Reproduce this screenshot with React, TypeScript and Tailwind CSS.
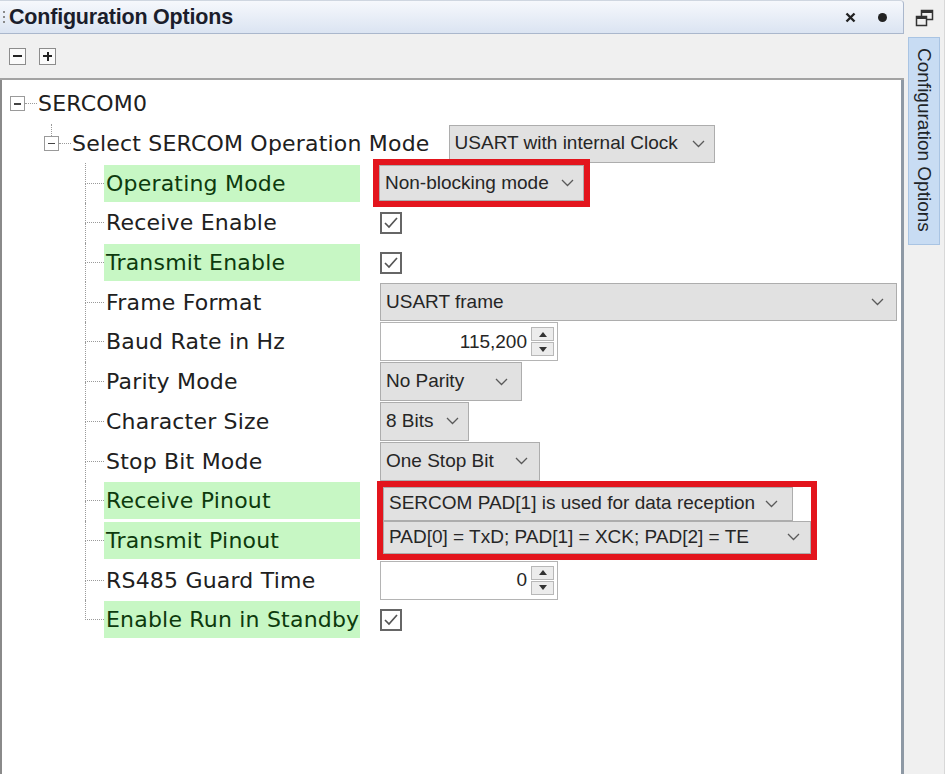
import React from "react";

const LABEL_FONT = { fontFamily: '"DejaVu Sans", Verdana, sans-serif' };

function Chevron() {
  return (
    <svg width="13" height="8" viewBox="0 0 13 8" className="shrink-0">
      <polyline points="1,1 6.5,6.5 12,1" fill="none" stroke="#5a5a5a" strokeWidth="1.3" />
    </svg>
  );
}

function Dropdown({ value, className }: { value: string; className: string }) {
  return (
    <div
      className={`bg-[#e1e1e1] border border-[#adadad] flex items-center justify-between pl-[5px] pr-[9px] text-[19px] text-[#262626] ${className}`}
      style={{ fontFamily: '"Liberation Sans", Arial, sans-serif' }}
    >
      <span className="whitespace-nowrap">{value}</span>
      <Chevron />
    </div>
  );
}

function Spinner({ value }: { value: string }) {
  return (
    <div className="w-[178px] h-[39px] bg-white border border-[#b4b4b4] flex items-center justify-end pr-[3px] gap-[4px]">
      <span className="text-[19px] text-[#262626]" style={{ fontFamily: '"Liberation Sans", Arial, sans-serif' }}>
        {value}
      </span>
      <div className="flex flex-col gap-[1px]">
        <div className="w-[23px] h-[14px] bg-[#ececec] border border-[#b8b8b8] flex items-center justify-center">
          <svg width="8" height="5" viewBox="0 0 8 5">
            <polygon points="4,0 8,5 0,5" fill="#333" />
          </svg>
        </div>
        <div className="w-[23px] h-[14px] bg-[#ececec] border border-[#b8b8b8] flex items-center justify-center">
          <svg width="8" height="5" viewBox="0 0 8 5">
            <polygon points="0,0 8,0 4,5" fill="#333" />
          </svg>
        </div>
      </div>
    </div>
  );
}

function Checkbox() {
  return (
    <div className="w-[22px] h-[22px] border-2 border-[#666] bg-white flex items-center justify-center">
      <svg width="16" height="14" viewBox="0 0 16 14">
        <polyline points="2,7 6,11 14,2" fill="none" stroke="#555" strokeWidth="1.7" />
      </svg>
    </div>
  );
}

function TreeBox() {
  return (
    <div className="w-[15px] h-[15px] border border-[#9a9a9a] bg-white flex items-center justify-center shrink-0">
      <div className="w-[7px] h-[1.5px] bg-[#444]" />
    </div>
  );
}

function Branch({ last }: { last?: boolean }) {
  return (
    <div className="w-[19px] self-stretch flex flex-col shrink-0">
      <div className="flex-1 border-l border-b border-dotted border-[#9a9a9a]" />
      <div className={`flex-1 ${last ? "" : "border-l border-dotted border-[#9a9a9a]"}`} />
    </div>
  );
}

function Label({ text, green }: { text: string; green?: boolean }) {
  return (
    <div
      className={`w-[256px] h-[37px] flex items-center pl-[2px] text-[22px] tracking-[0.2px] whitespace-nowrap ${
        green ? "bg-[#c7f7c4] text-[#0d3a0d]" : "text-[#202020]"
      }`}
      style={LABEL_FONT}
    >
      {text}
    </div>
  );
}

function Row({
  label,
  green,
  last,
  children,
}: {
  label: string;
  green?: boolean;
  last?: boolean;
  children?: React.ReactNode;
}) {
  return (
    <div className="flex h-[39.7px] items-center">
      <Branch last={last} />
      <Label text={label} green={green} />
      <div className="ml-[20px] flex items-center">{children}</div>
    </div>
  );
}

function RestoreIcon() {
  return (
    <svg width="19" height="19" viewBox="0 0 19 19">
      <rect x="6.5" y="1.5" width="11" height="9" fill="none" stroke="#333" strokeWidth="1.5" />
      <rect x="6.5" y="1" width="11" height="3" fill="#333" />
      <rect x="1.5" y="7.5" width="10" height="9" fill="#f0f0f0" stroke="#333" strokeWidth="1.5" />
      <rect x="1.5" y="7" width="10" height="3" fill="#333" />
    </svg>
  );
}

export default function App() {
  return (
    <div className="w-[945px] h-[774px] flex bg-[#f0f0f0] overflow-hidden">
      {/* main panel */}
      <div className="w-[904px] flex flex-col">
        <div className="h-[34px] shrink-0 flex items-center bg-gradient-to-b from-[#f6f8fc] to-[#dbe4f2] border-b border-[#aab7cc] border-r border-t border-t-[#cfd6e0] rounded-tr-[4px] pl-[3px] pr-[16px]">
          <div className="flex flex-col gap-[3px] mr-[4px]">
            <div className="w-[2px] h-[2px] bg-[#8a8a8a]" />
            <div className="w-[2px] h-[2px] bg-[#8a8a8a]" />
            <div className="w-[2px] h-[2px] bg-[#8a8a8a]" />
          </div>
          <span
            className="text-[21.5px] font-bold text-[#1b1d2b] tracking-[-0.2px]"
            style={{ fontFamily: '"Liberation Sans", Arial, sans-serif' }}
          >
            Configuration Options
          </span>
          <div className="ml-auto flex items-center gap-[22px]">
            <svg width="11" height="11" viewBox="0 0 11 11">
              <path d="M1.5 1.5 L9.5 9.5 M9.5 1.5 L1.5 9.5" stroke="#222" strokeWidth="2.4" />
            </svg>
            <div className="w-[9px] h-[9px] rounded-full bg-[#222]" />
          </div>
        </div>

        <div className="h-[46px] shrink-0 flex items-center gap-[13px] pl-[9px] border-b-2 border-[#a3a3a3]">
          <div className="w-[17px] h-[17px] border border-[#8c8c8c] bg-[#fafafa] flex items-center justify-center">
            <div className="w-[9px] h-[2px] bg-[#222]" />
          </div>
          <div className="w-[17px] h-[17px] border border-[#8c8c8c] bg-[#fafafa] flex items-center justify-center relative">
            <div className="w-[9px] h-[2px] bg-[#222]" />
            <div className="w-[2px] h-[9px] bg-[#222] absolute" />
          </div>
        </div>

        <div className="flex-1 bg-white border-l-2 border-[#8a8a8a] border-r-[3px] border-r-[#8e99a5] pt-[4px]">
          {/* SERCOM0 */}
          <div className="flex h-[39.7px] items-center pl-[8px]">
            <TreeBox />
            <div className="w-[12px] border-t border-dotted border-[#9a9a9a]" />
            <span className="ml-[1px] text-[22px] tracking-[0.2px] text-[#202020]" style={LABEL_FONT}>
              SERCOM0
            </span>
          </div>

          {/* Select SERCOM Operation Mode */}
          <div className="flex h-[39.7px] items-center pl-[42px]">
            <div className="self-stretch flex flex-col items-center w-[15px]">
              <div className="flex-1 border-l border-dotted border-[#9a9a9a]" />
              <TreeBox />
              <div className="flex-1" />
            </div>
            <div className="w-[12px] border-t border-dotted border-[#9a9a9a]" />
            <span className="ml-[1px] text-[22px] tracking-[0.2px] text-[#202020] whitespace-nowrap" style={LABEL_FONT}>
              Select SERCOM Operation Mode
            </span>
            <Dropdown value="USART with internal Clock" className="ml-[19px] w-[266px] h-[38px]" />
          </div>

          {/* children */}
          <div className="ml-[83px] flex flex-col">
            <div className="flex h-[39.7px] items-center">
              <Branch />
              <Label text="Operating Mode" green />
              <Dropdown
                value="Non-blocking mode"
                className="ml-[19px] w-[205px] h-[36px] outline-[6px] outline-solid outline-[#e3151d]"
              />
            </div>
            <Row label="Receive Enable">
              <Checkbox />
            </Row>
            <Row label="Transmit Enable" green>
              <Checkbox />
            </Row>
            <Row label="Frame Format">
              <Dropdown value="USART frame" className="w-[517px] h-[38px] pr-[12px]" />
            </Row>
            <Row label="Baud Rate in Hz">
              <Spinner value="115,200" />
            </Row>
            <Row label="Parity Mode">
              <Dropdown value="No Parity" className="w-[142px] h-[39px] pr-[13px]" />
            </Row>
            <Row label="Character Size">
              <Dropdown value="8 Bits" className="w-[89px] h-[39px]" />
            </Row>
            <Row label="Stop Bit Mode">
              <Dropdown value="One Stop Bit" className="w-[160px] h-[39px] pr-[11px]" />
            </Row>

            {/* pinout group */}
            <div className="flex">
              <div className="flex flex-col">
                <div className="flex h-[39.7px] items-center">
                  <Branch />
                  <Label text="Receive Pinout" green />
                </div>
                <div className="flex h-[39.7px] items-center">
                  <Branch />
                  <Label text="Transmit Pinout" green />
                </div>
              </div>
              <div className="ml-[17px] h-[79.4px] border-[6px] border-[#e3151d] flex flex-col">
                <Dropdown
                  value="SERCOM PAD[1] is used for data reception"
                  className="w-[410px] h-[33.7px] pr-[14px]"
                />
                <Dropdown
                  value="PAD[0] = TxD; PAD[1] = XCK; PAD[2] = TE"
                  className="w-[428px] h-[33.7px] pr-[10px]"
                />
              </div>
            </div>

            <Row label="RS485 Guard Time">
              <Spinner value="0" />
            </Row>
            <Row label="Enable Run in Standby" green last>
              <Checkbox />
            </Row>
          </div>
        </div>
      </div>

      {/* right strip */}
      <div className="flex-1 flex flex-col items-center border-r border-[#d8d8d8]">
        <div className="h-[37px] flex items-center justify-center">
          <RestoreIcon />
        </div>
        <div className="w-[32px] h-[208px] bg-[#c8dcf3] border border-[#a9c4e3] flex justify-center pt-[10px]">
          <span
            className="[writing-mode:vertical-rl] text-[19px] text-[#202428] whitespace-nowrap"
            style={{ fontFamily: '"Liberation Sans", Arial, sans-serif' }}
          >
            Configuration Options
          </span>
        </div>
      </div>
    </div>
  );
}
